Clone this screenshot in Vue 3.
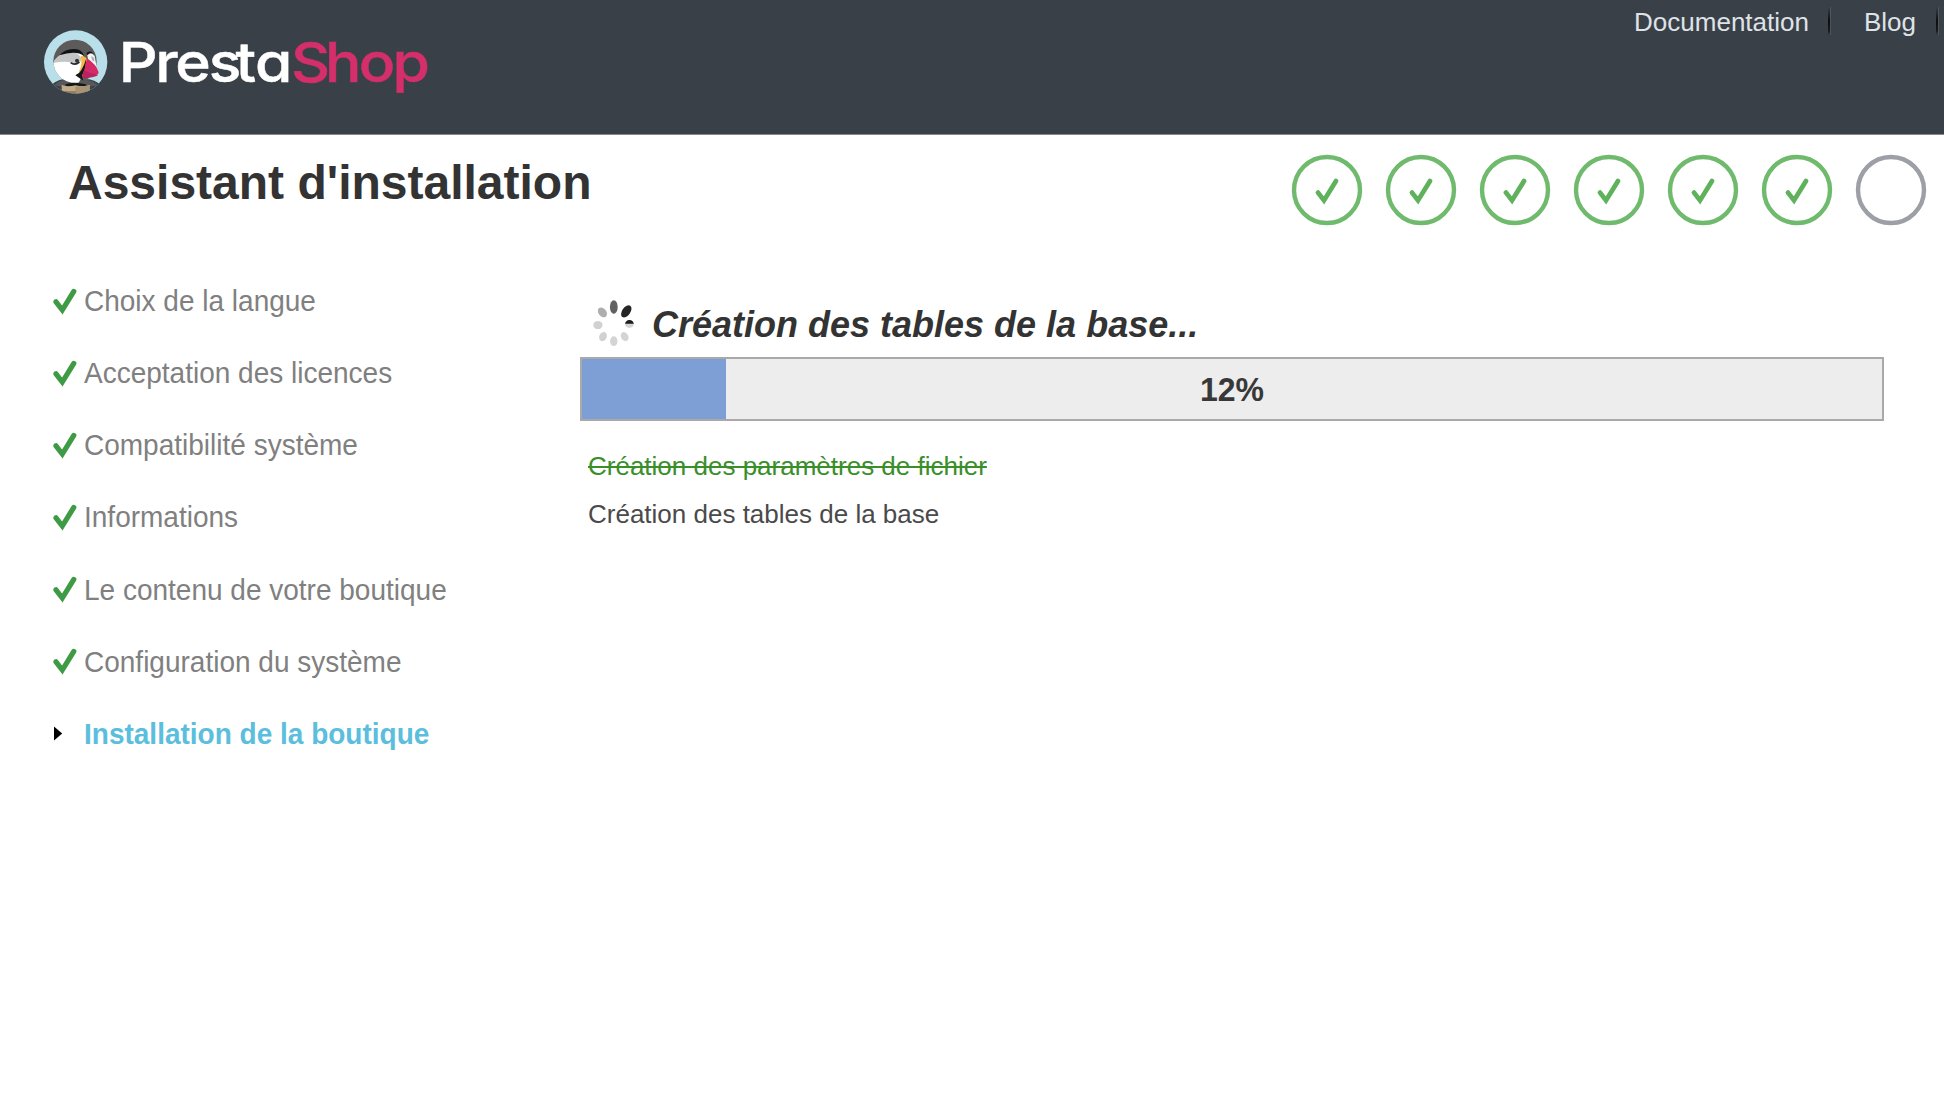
<script setup>
const steps = [
  'Choix de la langue',
  'Acceptation des licences',
  'Compatibilité système',
  'Informations',
  'Le contenu de votre boutique',
  'Configuration du système',
  'Installation de la boutique',
]
const current = 6
const progress = 12
const links = ['Documentation', 'Blog']
const tasks = [
  { label: 'Création des paramètres de fichier', done: true },
  { label: 'Création des tables de la base', done: false },
]
</script>

<template>
  <div class="page">
    <header class="header">
      <svg class="logo" width="400" height="76" viewBox="0 0 400 76">
        <g transform="scale(.33333)">
          <defs>
            <clipPath id="badge"><circle cx="119" cy="114" r="95" /></clipPath>
            <clipPath id="head"><circle cx="117" cy="112" r="65" /></clipPath>
          </defs>
          <g clip-path="url(#badge)">
            <rect x="20" y="15" width="200" height="200" fill="#b9dfeb" />
            <path d="M30 196 Q60 168 82 166 L160 166 Q190 174 210 196 L200 215 H30Z" fill="#3a4047" />
            <path d="M54 184 Q74 166 90 168 H154 Q174 172 186 184 L160 188 H78Z" fill="#56585b" />
            <g clip-path="url(#head)">
              <rect x="50" y="45" width="140" height="140" fill="#5c5b5a" />
              <path d="M50 120 Q66 88 100 82 Q130 78 142 96 L146 142 L126 180 H50Z" fill="#fff" />
              <path d="M54 110 Q72 86 102 84 Q128 84 136 104 Q134 122 118 122 Q104 108 54 116Z" fill="#c4c4c5" />
              <path d="M154 94 Q164 80 176 96 L182 130 L158 116Z" fill="#f4f4f4" />
            </g>
            <path d="M70 94 Q92 70 124 76 Q140 81 144 95 Q118 78 70 94Z" fill="#101418" />
            <path d="M151 88 Q160 76 174 89 Q162 84 154 93Z" fill="#101418" />
            <path d="M104 116 Q116 126 130 114" fill="none" stroke="#26292e" stroke-width="5" />
            <circle cx="123" cy="110" r="6" fill="#33363b" />
            <path d="M166 97 Q176 99 175 112 Q166 112 166 97Z" fill="#aeb2b5" />
            <path d="M134 96 Q150 96 154 108 Q153 124 140 140 L128 144 Q141 122 134 96Z" fill="#f7b843" />
            <path d="M151 103 L148 132 L138 156 L142 170 L118 154 Q138 148 151 103Z" fill="#15171b" />
            <path d="M153 103 Q181 121 188 145 Q188 158 141 162 Q138 155 145 138Z" fill="#d42b68" />
            <path d="M145 139 Q160 149 187 153 Q174 162 141 162 Q136 156 145 139Z" fill="#b9225b" />
            <path d="M88 181 Q112 172 150 181 L148 187 H91Z" fill="#171717" />
            <path d="M77 182 Q92 190 118 184 Q145 190 161 182 V202 H77Z" fill="#c1ab89" />
            <path d="M76 201 H118 V212 H80Z" fill="#94815f" />
            <path d="M118 188 L161 185 V205 L118 212Z" fill="#a89474" />
          </g>
        </g>
        <g transform="scale(1.1 1)">
          <text class="word presta" y="58" x="75.2 108.5 126.6 157 181.3 199">Presta</text>
          <text class="word shop" y="58" x="231.8 262.8 293.5 324.2">Shop</text>
        </g>
      </svg>
      <nav class="nav">
        <template v-for="link in links" :key="link">
          <a class="link">{{ link }}</a><i class="sep"></i>
        </template>
      </nav>
    </header>

    <div class="top">
      <h1>Assistant d'installation</h1>
      <div class="circles">
        <svg v-for="(s, i) in steps" :key="s" width="72" height="72" viewBox="-36 -36 72 72" fill="none">
          <circle r="33" :stroke="i < current ? '#6fba6c' : '#9d9fa7'" stroke-width="4.4" />
          <path v-if="i < current" d="M-9 2.6 L-3 10.4 L9 -8.9" stroke="#5fb25b" stroke-width="4.8" stroke-linecap="round" />
        </svg>
      </div>
    </div>

    <div class="body">
      <ul class="menu">
        <li v-for="(s, i) in steps" :key="s" :class="{ active: i === current }">
          <svg width="32" height="28" viewBox="0 0 32 28" fill="none">
            <path v-if="i < current" d="M4 14.8 L10.3 23 L21.8 4.4" stroke="#3f9a45" stroke-width="5.2" stroke-linecap="round" />
            <path v-else d="M2 7.5 L10.2 14.4 L2 21.5Z" fill="#000" />
          </svg>
          <span>{{ s }}</span>
        </li>
      </ul>

      <main class="install">
        <div class="status">
          <svg width="44" height="52" viewBox="0 0 44 52">
            <ellipse cx="21.8" cy="9" rx="3.9" ry="6.8" fill="#626262" />
            <ellipse cx="34.3" cy="13.4" rx="4.1" ry="6.9" transform="rotate(35 34.3 13.4)" fill="#252525" />
            <ellipse cx="37.4" cy="26" rx="4.4" ry="3.9" fill="#d4d4d4" />
            <path d="M33 25.8 Q34 22 37.4 22 Q41 22 41.8 25.8Z" fill="#1c1c1c" />
            <ellipse cx="32.7" cy="38.6" rx="3.6" ry="4.8" transform="rotate(-30 32.7 38.6)" fill="#d4d4d4" />
            <ellipse cx="21.8" cy="43.2" rx="3.7" ry="4.9" fill="#d4d4d4" />
            <ellipse cx="11" cy="38.6" rx="3.7" ry="4.8" transform="rotate(25 11 38.6)" fill="#d1d1d1" />
            <ellipse cx="5.9" cy="27" rx="4.6" ry="4.1" fill="#d1d1d1" />
            <ellipse cx="10.4" cy="14.4" rx="3.9" ry="5.5" transform="rotate(-38 10.4 14.4)" fill="#aeaeae" />
          </svg>
          <h2>Création des tables de la base...</h2>
        </div>
        <div class="bar">
          <div class="fill" :style="{ width: progress - 0.9 + '%' }"></div>
          <span class="pct">{{ progress }}%</span>
        </div>
        <ul class="tasks">
          <li v-for="t in tasks" :key="t.label" :class="{ done: t.done }">{{ t.label }}</li>
        </ul>
      </main>
    </div>
  </div>
</template>

<style>
body {
  margin: 0;
  background: #fff;
}
</style>

<style scoped>
.page {
  width: 1944px;
  height: 1108px;
  overflow: hidden;
  background: #fff;
  font-family: "Liberation Sans", Arial, sans-serif;
}
ul {
  list-style: none;
  margin: 0;
  padding: 0;
}
.header {
  box-sizing: border-box;
  height: 135px;
  padding: 0 5px 0 36px;
  display: flex;
  justify-content: space-between;
  align-items: flex-start;
  background: #3a4047;
  border-bottom: 1px solid #85898d;
}
.logo {
  margin-top: 24px;
}
.word {
  font-family: Inter, sans-serif;
  font-feature-settings: "cv11", "ss04";
  font-weight: 500;
  font-size: 55px;
  stroke-width: 0.5;
}
.presta {
  fill: #fff;
  stroke: #fff;
}
.shop {
  fill: #d42f6b;
  stroke: #d42f6b;
}
.nav {
  display: flex;
  align-items: flex-start;
  padding-top: 7px;
}
.link {
  color: #dfe3e7;
  font-size: 26px;
  line-height: 30px;
}
.sep {
  width: 2px;
  height: 28px;
  margin: 0 33px 0 19px;
  background: linear-gradient(#3a4047, #0c0d0e 50%, #181a1c 85%, #3a4047);
  border-right: 1px solid #4e545a;
}
.sep:last-child {
  margin: 0 0 0 20px;
}
.top {
  display: flex;
  justify-content: space-between;
  height: 130px;
  padding: 0 17px 0 68px;
}
h1 {
  margin: 12px 0 0;
  font-size: 48px;
  line-height: 72px;
  color: #333;
}
.circles {
  display: flex;
  gap: 22px;
  margin-top: 19px;
}
.body {
  display: flex;
}
.menu {
  width: 528px;
  padding-left: 52px;
}
.menu li {
  display: flex;
  align-items: center;
  height: 72px;
  font-size: 28px;
  line-height: 72px;
  color: #808080;
}
.menu span {
  padding-top: 2px;
  transform: scaleY(1.05);
}
.menu .active {
  color: #5bbedd;
  font-weight: bold;
}
.install {
  width: 1304px;
  padding-top: 33px;
}
.status {
  display: flex;
  height: 59px;
  padding-left: 12px;
}
h2 {
  margin: 7px 0 0 16px;
  font-size: 36px;
  font-style: italic;
  line-height: 40px;
  color: #333;
}
.bar {
  box-sizing: border-box;
  display: grid;
  height: 64px;
  border: 2px solid #a9a9a9;
  background: #ededed;
}
.fill,
.pct {
  grid-area: 1 / 1;
}
.fill {
  background: #7d9fd6;
}
.pct {
  text-align: center;
  font-size: 32px;
  font-weight: bold;
  line-height: 60px;
  color: #383838;
  transform: scaleY(1.06);
}
.tasks {
  padding: 21px 0 0 8px;
  font-size: 26px;
  line-height: 48px;
  color: #4a4a4a;
}
.tasks .done {
  color: #3a8f2b;
  text-decoration: line-through;
}
</style>
